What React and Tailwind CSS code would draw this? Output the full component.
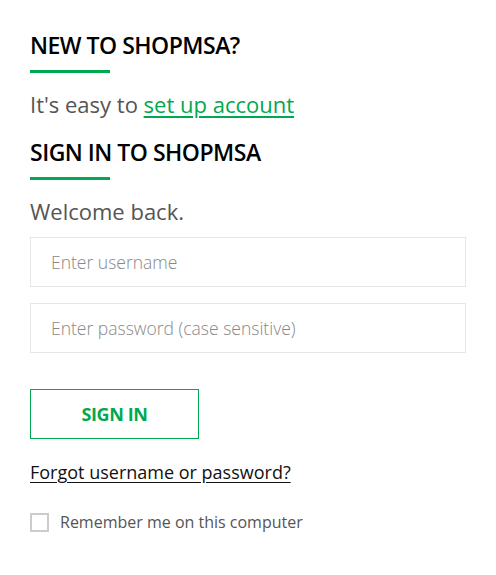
import React, { useState } from 'react';

function SectionHeading({ children }) {
  return (
    <div>
      <h2 className="font-['Open_Sans',sans-serif] text-[23px] font-semibold leading-[30px] tracking-[-0.5px] text-black">
        {children}
      </h2>
      <div className="mt-[10px] h-[3px] w-[80px] bg-[#00a94f]" />
    </div>
  );
}

export default function App() {
  const [remember, setRemember] = useState(false);

  return (
    <div className="min-h-[575px] w-[496px] bg-white px-[30px] pt-[30px] font-['Open_Sans',sans-serif]">
      <SectionHeading>NEW TO SHOPMSA?</SectionHeading>
      <p className="mt-[16px] text-[22px] leading-[30px] text-[#555]">
        It's easy to{' '}
        <a href="#" className="text-[#00a94f] underline underline-offset-[3px]">
          set up account
        </a>
      </p>

      <div className="mt-[18px]">
        <SectionHeading>SIGN IN TO SHOPMSA</SectionHeading>
      </div>
      <p className="mt-[16px] text-[22px] leading-[30px] text-[#555]">Welcome back.</p>

      <form className="mt-[11px] flex flex-col gap-[16px]">
        <input
          type="text"
          placeholder="Enter username"
          className="h-[50px] w-full border border-[#e6e6e6] px-[20px] text-[17.5px] font-light text-[#333] outline-none placeholder:text-[#888]"
        />
        <input
          type="password"
          placeholder="Enter password (case sensitive)"
          className="h-[50px] w-full border border-[#e6e6e6] px-[20px] text-[17.5px] font-light text-[#333] outline-none placeholder:text-[#888]"
        />
      </form>

      <button
        type="button"
        className="mt-[36px] h-[50px] w-[169px] border border-[#00a94f] text-[18px] font-bold tracking-[-0.4px] text-[#00a94f]"
      >
        SIGN IN
      </button>

      <div className="mt-[20px] text-[18px] leading-[26px]">
        <a href="#" className="text-[#111] underline underline-offset-[3px]">
          Forgot username or password?
        </a>
      </div>

      <label className="mt-[26px] flex cursor-pointer items-center gap-[11px]">
        <span
          onClick={() => setRemember(!remember)}
          className="h-[19px] w-[19px] border-2 border-[#ccc] bg-white"
        />
        <span className="text-[16px] leading-[22px] text-[#555]">Remember me on this computer</span>
      </label>
    </div>
  );
}
